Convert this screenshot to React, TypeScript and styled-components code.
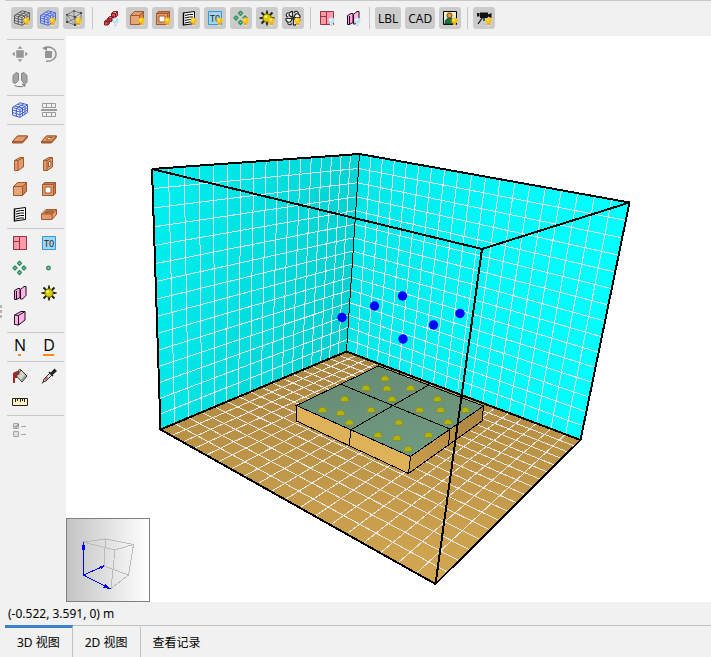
import React, { useState } from "react";
import styled, { createGlobalStyle, css } from "styled-components";

const GlobalStyle = createGlobalStyle`
  * { box-sizing: border-box; }
  html, body, #root { height: 100%; }
  body {
    margin: 0;
    background: #f1f1f1;
    color: #000;
    font-family: "Noto Sans", "Noto Sans CJK SC", sans-serif;
    font-size: 12px;
  }
`;

const Page = styled.div`
  display: flex;
  flex-direction: column;
  height: 100vh;
`;

const TopBar = styled.header`
  display: flex;
  align-items: center;
  gap: 4px;
  height: 36px;
  flex: none;
  margin-left: 5px;
  padding: 0 0 1px 6px;
  border-top: 1px solid #c8c8c8;
`;

const ToolButton = styled.button<{ $label?: boolean }>`
  display: flex;
  align-items: center;
  justify-content: center;
  flex: none;
  width: 22px;
  height: 22px;
  padding: 0;
  border: 0;
  border-radius: 3px;
  background: transparent;
  color: #000;
  font: inherit;
  &[aria-pressed="true"] { background: #cbcbcb; }
  ${(p) => p.$label && css`
    width: auto;
    padding: 0 3px;
    font-family: "Open Sans", "Noto Sans", sans-serif;
  `}
`;

const TopDivider = styled.span<{ $span: number }>`
  flex: none;
  width: ${(p) => p.$span}px;
  height: 22px;
  background: linear-gradient(#c8c8c8, #c8c8c8) center / 1px 100% no-repeat;
`;

const Workspace = styled.div`
  display: flex;
  flex: 1;
  min-height: 0;
`;

const SidePanel = styled.aside`
  display: flex;
  flex: none;
  width: 66px;
`;

const Grip = styled.div`
  display: flex;
  flex-direction: column;
  justify-content: center;
  gap: 2px;
  width: 7px;
  padding-bottom: 16px;
`;

const GripDot = styled.span`
  width: 2px;
  height: 3px;
  background: #b4b4b4;
`;

const Palette = styled.nav`
  width: 57px;
  padding-top: 3px;
`;

const ToolGroup = styled.div<{ $row?: number }>`
  display: grid;
  grid-template-columns: 26px 26px;
  grid-auto-rows: ${(p) => p.$row ?? 25}px;
  column-gap: 3px;
  align-items: center;
  justify-items: center;
  padding: 1px 0 2px;
  border-top: 1px solid #c8c8c8;
`;

const LetterMark = styled.span<{ $wide?: boolean }>`
  display: flex;
  flex-direction: column;
  align-items: center;
  font-family: "Open Sans", "Noto Sans", sans-serif;
  font-size: 16px;
  line-height: 15px;
  &::after {
    content: "";
    width: ${(p) => (p.$wide ? 11 : 3)}px;
    height: 2px;
    margin-top: 1px;
    background: #ff8a1c;
  }
`;

const Viewport = styled.main`
  position: relative;
  flex: 1;
  min-width: 0;
  background: #fff;
`;

const SceneDrawing = styled.svg`
  display: block;
  width: 100%;
  height: 100%;
`;

const Compass = styled.div`
  position: absolute;
  left: 0;
  bottom: 0;
  width: 84px;
  height: 84px;
  border: 1px solid #808080;
  background: linear-gradient(90deg, #c3c3c3, #fff);
`;

const StatusBar = styled.footer`
  flex: none;
  height: 23px;
  padding-left: 8px;
  line-height: 24px;
`;

const TabBar = styled.div`
  display: flex;
  flex: none;
  height: 32px;
  margin-left: 5px;
  border-top: 1px solid #c0c0c0;
`;

const Tab = styled.button`
  margin-top: -1px;
  padding: 0 12px;
  border: 0;
  border-top: 3px solid transparent;
  border-right: 1px solid #c0c0c0;
  background: transparent;
  color: #000;
  font: inherit;
  line-height: 20px;
  white-space: nowrap;
  &:last-child { border-right: 0; }
  &[aria-selected="true"] { border-top-color: #3d7fc8; }
`;

/* ---------- icons ---------- */

type Light = "on" | "off" | undefined;

const Bulb = ({ light }: { light: Light }) =>
  light ? (
    <g>
      <circle cx="12.5" cy="10.5" r="3" fill={light === "on" ? "#ffc010" : "#b8e0f6"} />
      <circle cx="11.8" cy="9.7" r="1.2" fill={light === "on" ? "#ffe860" : "#f4fcff"} />
      <path d="M11 13h3v2h-3z" fill={light === "on" ? "#dba93a" : "#d4e6f2"} />
      <path d="M11.5 15.5h2" stroke={light === "on" ? "#fff0b0" : "#b8c8d4"} />
    </g>
  ) : null;

const Icon = ({ light, children }: { light?: Light; children: React.ReactNode }) => (
  <svg width="16" height="16" viewBox="0 0 16 16" fill="none" aria-hidden="true">
    {children}
    <Bulb light={light} />
  </svg>
);

const GridCube = ({ color, fill }: { color: string; fill: string }) => (
  <g stroke={color}>
    <path d="M.5 5.5 8 .8l7.500 2v7.700L8 15.300 .5 13z" fill={fill} />
    <path d="M.5 5.500 8 7.500v7.800M8 7.500l7.500-4.700" />
    <path d="M4.300 6.500v7.700M.5 8 8 10l7.500-4.500M.5 10.500 8 12.700l7.500-4.600M10.500 6v7.700M13 4.400v7.700M3 4l7.500 2M5.500 2.400l7.500 2M4.300 6.500l7.500-4.700" />
  </g>
);

const WireCube = () => (
  <g stroke="#777">
    <path d="M1 4.5 8 1l7 2v7.5L9 15l-8-3zM1 4.5 9 7v8M9 7l6-4M8 1v8L1 12M8 9l7 1.5" />
    <path d="M1 4.5l8 10.5M9 7l6 3.5" strokeWidth=".7" />
    <path d="M0 4h2v1.5H0zM7.300 0h1.500v1.500H7.300zM14 2h2v2h-2zM0 11h2v2H0zM8 6h2v2H8zM8 14h2v2H8z" fill="#444" stroke="none" />
  </g>
);

const RedBlocks = () => (
  <g stroke="#8c1822" fill="#c9545c">
    <path d="M8.5 3.5 10.5 1.5h4v4l-2 2h-4zM8.5 3.5h4l2-2M12.5 3.5v4" />
    <path d="M4.5 8.5 6.5 6.5h4v3l-2 2h-4zM4.5 8.5h4l2-2M8.5 8.5v3" />
    <path d="M1.5 11.5 3 10h3.500v3.500L5 15H1.500zM1.500 11.500H5L6.500 10M5 11.500V15" />
  </g>
);

const WOOD = { stroke: "#a0592f", fill: "#e39a6c" };

const SolidBox = () => (
  <g {...WOOD}>
    <path d="M1.500 5.500 5.500 1.500h9v8.500L10.500 14.500h-9z" />
    <path d="M1.500 5.500h9v9h-9z" fill="#e8a578" />
    <path d="M10.500 5.500 14.500 1.500v8.500L10.500 14.500z" fill="#cc8153" />
  </g>
);

const HollowBox = () => (
  <g {...WOOD}>
    <path d="M1.500 3.500l2-2h11v11l-2 2h-11z" fill="#c87b4c" />
    <path d="M1.500 3.500h11v11h-11z" />
    <path d="M4 6h6v6H4z" fill="#fff" />
    <path d="M12.500 3.500l2-2" />
  </g>
);

const Louver = () => (
  <g stroke="#000">
    <path d="M2.500 3 13.500 1.500v12l-11 1.500z" fill="#fff" />
    <path d="M4 5.500l4.500-1 3.500 0M4 8l4.500-1 3.500 0M4 10.500l4.500-1 3.500 0M4 13l4.500-1 3.500 0" />
    <path d="M2.500 2.500v13" strokeWidth="1.500" />
  </g>
);

const TZero = () => (
  <>
    <path d="M1.500 1.500h13v13h-13z" fill="#a6d5ee" stroke="#299ddb" />
    <text x="8" y="11.500" textAnchor="middle" fill="#222" fontSize="9" fontFamily="Noto Sans, sans-serif">T0</text>
  </>
);

const GreenDots = () => (
  <g stroke="#2b8a5d" fill="#8cc7a5" strokeWidth="1.300">
    <path d="M7.500 1.300l2 2-2 2-2-2zM3 6l2 2-2 2-2-2zM12 6l2 2-2 2-2-2zM7.500 10.500l2 2-2 2-2-2z" strokeLinejoin="round" />
  </g>
);

const GreenDot = () => <circle cx="7.500" cy="8" r="1.800" fill="#8cc7a5" stroke="#2b8a5d" strokeWidth="1.300" />;

const Sun = () => (
  <g stroke="#222">
    <path d="M8 .5v15M.5 8h15M2.500 2.500l11 11M13.500 2.500l-11 11" strokeWidth="2" />
    <circle cx="8" cy="8" r="4.200" fill="#d8cc00" stroke="#5a5700" />
    <path d="M7.500 1h1M7.500 15h1M.5 8h1M14.500 8h1" stroke="#d4c800" />
    <circle cx="6.800" cy="6.600" r="1.400" fill="#fff76a" stroke="none" />
  </g>
);

const Fan = () => (
  <g stroke="#222" fill="#f4f4f4" strokeWidth="1.200">
    <path d="M7.500 7C4 6.500 3 4 5 2.500S8 1 7.500 3zM9 7.500c.5-3.500 3-5 5-3s1 3.500-.5 3zM8.500 9c3.500.5 5 3 3 5s-3.500 1-3-.5zM7 8.500c-.5 3.500-3 5-5 3s-1-3.500.5-3z" strokeLinejoin="round" />
    <path d="M3 7C.5 6.500.5 3.500 3.500 2.500M9 2.500c2-2 4-1 4.500 1M13.500 8c2.500 1 1.500 4-.5 5M7 13.500c-2 2-4 1.500-4.500-1" />
    <circle cx="8" cy="8" r="1" />
  </g>
);

const PinkPanes = () => (
  <g stroke="#943447" fill="#ff9ba8">
    <path d="M1.500 1.500h13v13h-13zM7.500 1.500v13M1.500 6.500h6" />
  </g>
);

const PinkDoors = () => (
  <g stroke="#1e0a1a" fill="#ffa8e4">
    <path d="M2.500 5.500 6 3.500h2v9L4.500 14.500h-2z" />
    <path d="M4.500 6v8.500" />
    <path d="M8.500 4.500 12 1.500h2v9l-3.500 3.500h-2z" fill="#ffb4e8" />
  </g>
);

const PinkBlock = () => (
  <g stroke="#1e0a1a" fill="#ffb4e8">
    <path d="M2.500 5 9 1.500h4v8.500L6.500 15l-4-.500z" />
    <path d="M2.500 5l4 .500V15M6.500 5.500l6.500-4" />
  </g>
);

const Portrait = () => (
  <>
    <path d="M1.500 1.500h13v13h-13z" fill="#d3f0e6" stroke="#000" />
    <path d="M2 2h12v3H2z" fill="#fff3a0" />
    <path d="M3 14c0-5 3-6 5-6s5 1 5 6z" fill="#237536" stroke="#163c1c" />
    <circle cx="7.500" cy="5.500" r="2.500" fill="#e59b49" stroke="#6a4424" />
  </>
);

const Camera = () => (
  <g fill="#111">
    <path d="M4 2.500h8v5.500H4zM1 3h2.500v3.500H1zM12 4.500l3.500-1.500v5L12 6.500z" />
    <path d="M6.500 7.500l-4.500 6.500M8 8v3" stroke="#111" strokeWidth="1.300" />
  </g>
);

const MoveArrows = () => (
  <g fill="#969696">
    <path d="M4.500 4.500h7v7h-7z" stroke="#aaa" />
    <path d="M8 0l2.500 2.800h-5zM8 16l2.500-2.800h-5zM0 8l2.800-2.500v5zM16 8l-2.800-2.500v5z" />
  </g>
);

const Rotate = () => (
  <g stroke="#929292">
    <path d="M4.500 5.500h6v6h-6z" fill="#969696" />
    <path d="M3.500 2C9-.500 15 3 15 8s-5 8-10 7" strokeWidth="1.500" />
    <path d="M6 0v5L1 2z" fill="#929292" stroke="none" />
  </g>
);

const Mirror = () => (
  <g fill="#a4a4a4" stroke="#858585">
    <path d="M1 3.500l3-3 2.500 1v7l-3 3-2.500-1zM15 3.500l-3-3-2.500 1v7l3 3 2.500-1z" />
    <path d="M2.500 13.500c4 1.500 7 1.500 9 .5" fill="none" strokeWidth="1.300" />
    <path d="M10 12h3v2.500z" />
  </g>
);

const GridRows = () => (
  <g stroke="#9b9b9b">
    <path d="M1.500 1.500h13v4h-13zM5.500 1.500v4M10.500 1.500v4M1.500 10.500h13v4h-13zM5.500 10.500v4M10.500 10.500v4" />
    <path d="M0 8h16" strokeWidth="2" />
  </g>
);

const Plate = ({ open }: { open?: boolean }) => (
  <g {...WOOD}>
    <path d="M.5 10.500 5.500 5h10v1.500l-5 5.500H.5z" fill="#b96c3e" />
    <path d="M.5 10.500h10L15.500 5h-10z" />
    {open && <path d="M5.500 8.800 7.500 6.500h3.500L9 8.800z" fill="#fff" />}
  </g>
);

const Wall = ({ open }: { open?: boolean }) => (
  <g {...WOOD}>
    <path d="M2.500 4.500 8 1.500h3.500V11L6 14.500H2.500z" />
    <path d="M2.500 4.500H6v10M6 4.500l5.500-3" />
    {open && <path d="M7.500 6 9.800 4.800V9.500l-2.300 1.300z" fill="#fff" />}
  </g>
);

const Tray = () => (
  <g {...WOOD}>
    <path d="M.5 8 5 3.500h10.500v5L11 13.500H.5z" />
    <path d="M.5 8H11v5.500M11 8l4.500-4.500" />
    <path d="M3.500 7 5.500 5h7l-2 2z" fill="#b97045" />
    <path d="M6 5v2" />
  </g>
);

const Bucket = () => (
  <>
    <path d="M1 15V6c0-3 5-2 6-4v3C5 6 5 7 5 10H3v5z" fill="#a92424" />
    <path d="M4.500 8 9 2l6 6-5 6z" fill="#d6d6c7" stroke="#333" />
    <path d="M9 2c-2-2-3 0-2 5" stroke="#444" />
    <path d="M9 12l4-5 1 1-4 5z" fill="#92978a" />
  </>
);

const Dropper = () => (
  <>
    <path d="M2 14 3 11l6-6 2 2-6 6z" fill="#ddd" stroke="#333" />
    <path d="M3 11.500l3-3 1.500 1.500-3 3z" fill="#c86969" />
    <path d="M8 4l4 4M10 5.500l3.500-4 1.500 1.500-4 3.500z" fill="#222" stroke="#222" strokeWidth="1.500" />
    <path d="M1 15.500l1.500-2" stroke="#222" />
  </>
);

const Ruler = () => (
  <>
    <path d="M.5 5.500h15v7H.5z" fill="#fff2be" stroke="#222" />
    <path d="M3.500 6v3M5.500 6v2M8.500 6v3M10.500 6v2M12.500 6v3" stroke="#222" />
  </>
);

const Checks = () => (
  <g stroke="#a4a4a4">
    <path d="M1.500 1.500h5v5h-5zM1.500 9.500h5v5h-5z" fill="#ddd" />
    <path d="M9 4.500h5M9 12.500h5" />
    <path d="M2.500 4 4 5.500 6.500 2" stroke="#777" />
  </g>
);

/* ---------- 3D scene ---------- */

type Point = [number, number];
type Quad = [Point, Point, Point, Point];

/** Projective map of the unit square onto a quadrilateral. */
function projector([p0, p1, p2, p3]: Quad) {
  const dx1 = p1[0] - p2[0], dx2 = p3[0] - p2[0], dx3 = p0[0] - p1[0] + p2[0] - p3[0];
  const dy1 = p1[1] - p2[1], dy2 = p3[1] - p2[1], dy3 = p0[1] - p1[1] + p2[1] - p3[1];
  const det = dx1 * dy2 - dx2 * dy1;
  const g = (dx3 * dy2 - dx2 * dy3) / det;
  const h = (dx1 * dy3 - dx3 * dy1) / det;
  return (u: number, v: number): Point => {
    const w = g * u + h * v + 1;
    return [
      ((p1[0] - p0[0] + g * p1[0]) * u + (p3[0] - p0[0] + h * p3[0]) * v + p0[0]) / w,
      ((p1[1] - p0[1] + g * p1[1]) * u + (p3[1] - p0[1] + h * p3[1]) * v + p0[1]) / w,
    ];
  };
}

function gridPath(quad: Quad, columns: number, rows: number) {
  const at = projector(quad);
  const parts: string[] = [];
  for (let i = 1; i < columns; i++) parts.push(`M${at(i / columns, 0)}L${at(i / columns, 1)}`);
  for (let j = 1; j < rows; j++) parts.push(`M${at(0, j / rows)}L${at(1, j / rows)}`);
  return parts.join("");
}

const top: Record<string, Point> = { left: [152, 169], back: [359.5, 154], right: [629.5, 202.5], front: [482, 249] };
const base: Record<string, Point> = { left: [160.5, 429.5], back: [346.5, 351.5], right: [580.5, 440], front: [435.5, 584] };

const surfaces: { quad: Quad; columns: number; rows: number; fill: string }[] = [
  { quad: [top.left, top.back, base.back, base.left], columns: 17, rows: 15, fill: "url(#leftWall)" },
  { quad: [top.back, top.right, base.right, base.back], columns: 19, rows: 15, fill: "url(#rightWall)" },
  { quad: [base.left, base.back, base.right, base.front], columns: 17, rows: 19, fill: "url(#floor)" },
];

const domes: Point[] = [
  [385, 378], [366, 387.5], [387, 388], [410.5, 387.5], [344.5, 398.5], [392, 398.5], [437.5, 398.5],
  [322.5, 409.5], [340.5, 412.5], [349.5, 422], [371, 409.5], [419.5, 409.5], [440.5, 409.5],
  [465.5, 409.5], [448, 421.5], [399, 422], [378, 434.5], [397, 437.5], [428.5, 434.5], [408, 448.5],
];

const probes: Point[] = [[342, 317.5], [374.5, 306], [402.5, 296], [460, 313.5], [433.5, 325], [403, 339]];

const Scene = () => (
  <SceneDrawing viewBox="66 36 645 566" role="img" aria-label="3D">
    <defs>
      <linearGradient id="leftWall" gradientUnits="userSpaceOnUse" x1="152" y1="250" x2="359" y2="300">
        <stop offset="0" stopColor="#00eeee" /><stop offset="1" stopColor="#00cfcf" />
      </linearGradient>
      <linearGradient id="rightWall" gradientUnits="userSpaceOnUse" x1="347" y1="280" x2="600" y2="300">
        <stop offset="0" stopColor="#00e6e8" /><stop offset=".6" stopColor="#00fafa" /><stop offset="1" stopColor="#00ffff" />
      </linearGradient>
      <linearGradient id="floor" gradientUnits="userSpaceOnUse" x1="370" y1="350" x2="370" y2="584">
        <stop offset="0" stopColor="#aa853f" /><stop offset="1" stopColor="#d4a852" />
      </linearGradient>
      <linearGradient id="slabSide" gradientUnits="userSpaceOnUse" x1="410" y1="460" x2="484" y2="410">
        <stop offset="0" stopColor="#c99c4c" /><stop offset="1" stopColor="#a9833f" />
      </linearGradient>
      <linearGradient id="slabTop" gradientUnits="userSpaceOnUse" x1="380" y1="366" x2="400" y2="456">
        <stop offset="0" stopColor="#678c73" /><stop offset="1" stopColor="#6f9a80" />
      </linearGradient>
    </defs>
    {surfaces.map(({ quad, columns, rows, fill }) => (
      <g key={fill} shapeRendering="crispEdges">
        <polygon points={quad.join(" ")} fill={fill} />
        <path d={gridPath(quad, columns, rows)} stroke="#e6e6e6" fill="none" />
      </g>
    ))}
    <g shapeRendering="crispEdges" stroke="#000" fill="none">
      <path d={`M${top.back}L${base.back}`} />
      <path d={`M${base.left}L${base.back}L${base.right}M${top.left}L${top.back}L${top.right}`} strokeWidth="2" />
      <path d="M296.500 405.500v15.500L408.500 473.500l2-17z" fill="#dfb158" />
      <path d="M410.500 456.500l-2 17L482 421l1.500-15z" fill="url(#slabSide)" />
      <path d="M296.500 405.500 378.500 366l105 40-73 50.500z" fill="url(#slabTop)" />
      <path d="M341.500 384.500 450 429l-1.500 16.500M429.500 384.500l-79 45.500-1 16" />
    </g>
    {domes.map(([x, y]) => (
      <path key={`${x}-${y}`} d={`M${x - 4} ${y + 3}C${x - 5} ${y - 4} ${x + 5} ${y - 4} ${x + 4} ${y + 3}z`} fill="#b3b300" stroke="#82843a" strokeWidth=".7" />
    ))}
    {probes.map(([x, y]) => <circle key={x} cx={x} cy={y} r="4.7" fill="#0000ff" />)}
    <g shapeRendering="crispEdges" stroke="#000" fill="none" strokeWidth="2">
      <path d={`M${top.left}L${top.front}L${top.right}M${top.front}L${base.front}M${top.left}L${base.left}L${base.front}L${base.right}L${top.right}`} />
    </g>
  </SceneDrawing>
);

const CompassDrawing = () => (
  <svg width="82" height="82" viewBox="67 519 82 82" fill="none" aria-hidden="true">
    <g shapeRendering="crispEdges">
      <path d="M83.500 542 105.500 539 133.500 544.500 115 550zM105.500 539 104 566 128.500 575 133.500 544.500M115 550 111 588.500 128.500 575" stroke="#bbb" />
      <path d="M83.500 542v33L104 566M83.500 575 110.500 589" stroke="#0000f0" />
      <path d="M82 545h3v5h-3zM99 567l5-2-2 4zM105 584l-2 4 7 1z" fill="#0000ff" />
    </g>
  </svg>
);

/* ---------- tool definitions ---------- */

type Tool = { name: string; art?: React.ReactNode; light?: Light; label?: string; pressed?: boolean };

const topTools: (Tool | number)[] = [
  { name: "Grid", art: <GridCube color="#5a5a5a" fill="#dcdcdc" />, light: "on", pressed: true },
  { name: "Mesh", art: <GridCube color="#4a68d6" fill="#ccd5fa" />, light: "on", pressed: true },
  { name: "Wireframe", art: <WireCube />, light: "on", pressed: true },
  7,
  { name: "Assembly", art: <RedBlocks />, light: "off" },
  { name: "Solids", art: <SolidBox />, light: "on", pressed: true },
  { name: "Enclosures", art: <HollowBox />, light: "on", pressed: true },
  { name: "Louvers", art: <Louver />, light: "on", pressed: true },
  { name: "Temperature", art: <TZero />, light: "on", pressed: true },
  { name: "Vents", art: <GreenDots />, light: "on", pressed: true },
  { name: "Sources", art: <Sun />, light: "on", pressed: true },
  { name: "Fans", art: <Fan />, light: "on", pressed: true },
  4,
  { name: "Panes", art: <PinkPanes />, light: "off" },
  { name: "Doors", art: <PinkDoors />, light: "off" },
  3,
  { name: "LBL", label: "LBL", pressed: true },
  { name: "CAD", label: "CAD", pressed: true },
  { name: "Portrait", art: <Portrait />, light: "on", pressed: true },
  4,
  { name: "Camera", art: <Camera />, light: "on", pressed: true },
];

const sideGroups: { row?: number; tools: Tool[] }[] = [
  { row: 26, tools: [{ name: "Move", art: <MoveArrows /> }, { name: "Rotate", art: <Rotate /> }, { name: "Mirror", art: <Mirror /> }] },
  { tools: [{ name: "Mesh", art: <GridCube color="#3b5bd0" fill="#fff" /> }, { name: "Split", art: <GridRows /> }] },
  {
    tools: [
      { name: "Plate", art: <Plate /> }, { name: "Open plate", art: <Plate open /> },
      { name: "Wall", art: <Wall /> }, { name: "Open wall", art: <Wall open /> },
      { name: "Solid", art: <SolidBox /> }, { name: "Enclosure", art: <HollowBox /> },
      { name: "Louver", art: <Louver /> }, { name: "Tray", art: <Tray /> },
    ],
  },
  {
    tools: [
      { name: "Panes", art: <PinkPanes /> }, { name: "Temperature", art: <TZero /> },
      { name: "Vents", art: <GreenDots /> }, { name: "Vent", art: <GreenDot /> },
      { name: "Doors", art: <PinkDoors /> }, { name: "Source", art: <Sun /> },
      { name: "Block", art: <PinkBlock /> },
    ],
  },
  { tools: [{ name: "N", label: "N" }, { name: "D", label: "D" }] },
  { tools: [{ name: "Fill", art: <Bucket /> }, { name: "Pick", art: <Dropper /> }, { name: "Measure", art: <Ruler /> }] },
  { tools: [{ name: "Checks", art: <Checks /> }] },
];

const TopTool = ({ tool }: { tool: Tool }) => {
  const [pressed, setPressed] = useState(!!tool.pressed);
  return (
    <ToolButton type="button" aria-label={tool.name} aria-pressed={pressed} $label={!!tool.label} onClick={() => setPressed(!pressed)}>
      {tool.label ?? <Icon light={tool.light}>{tool.art}</Icon>}
    </ToolButton>
  );
};

const tabs = ["3D 视图", "2D 视图", "查看记录"];

export default function App() {
  const [active, setActive] = useState(0);
  return (
    <Page>
      <GlobalStyle />
      <TopBar>
        {topTools.map((tool, i) =>
          typeof tool === "number" ? <TopDivider key={i} $span={tool} /> : <TopTool key={i} tool={tool} />
        )}
      </TopBar>
      <Workspace>
        <SidePanel>
          <Grip><GripDot /><GripDot /><GripDot /></Grip>
          <Palette>
            {sideGroups.map((group, i) => (
              <ToolGroup key={i} $row={group.row}>
                {group.tools.map((tool) => (
                  <ToolButton key={tool.name} type="button" aria-label={tool.name}>
                    {tool.label ? <LetterMark $wide={tool.label === "D"}>{tool.label}</LetterMark> : <Icon>{tool.art}</Icon>}
                  </ToolButton>
                ))}
              </ToolGroup>
            ))}
          </Palette>
        </SidePanel>
        <Viewport>
          <Scene />
          <Compass><CompassDrawing /></Compass>
        </Viewport>
      </Workspace>
      <StatusBar>(-0.522, 3.591, 0) m</StatusBar>
      <TabBar role="tablist">
        {tabs.map((tab, i) => (
          <Tab key={tab} type="button" role="tab" aria-selected={i === active} onClick={() => setActive(i)}>{tab}</Tab>
        ))}
      </TabBar>
    </Page>
  );
}
